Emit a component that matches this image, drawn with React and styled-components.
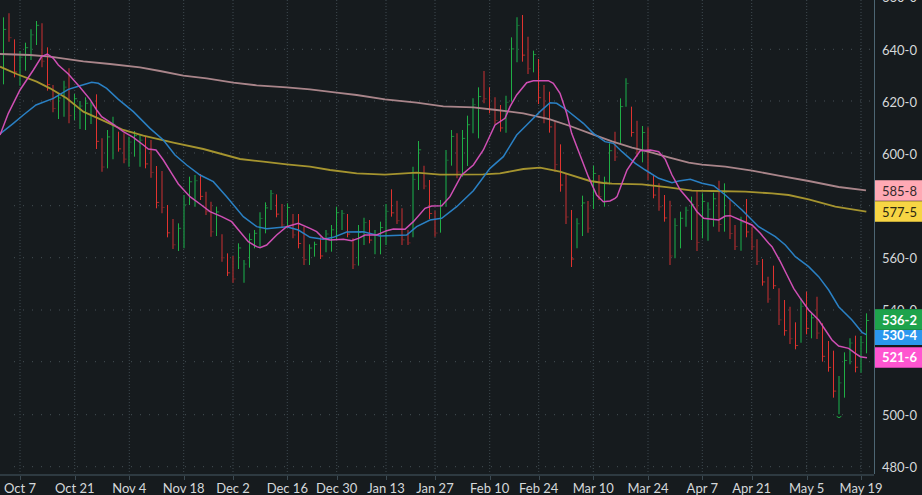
import React from 'react';
import styled, { createGlobalStyle } from 'styled-components';

const Global = createGlobalStyle`
  html, body { margin: 0; padding: 0; background: #161b1e; }
  body { overflow: hidden; }
`;

/* all chart data is in a 3x grid: 2622 x 1422 = 874 x 474 px */
const barSets = [
  [0, [
    [10,52,253,'G'],[26,40,125,'r'],[43,118,232,'R'],[60,153,257,'g'],[76,128,212,'G'],[92,88,180,'g'],[109,63,135,'G'],[125,70,202,'r'],
    [142,142,272,'R'],[158,255,337,'r'],[175,280,357,'G'],[191,242,350,'g'],[207,205,370,'r'],[223,282,360,'G'],[240,303,387,'g'],[256,292,390,'G'],
    [272,305,372,'g'],[289,283,447,'R'],[306,415,515,'r'],[322,390,505,'G'],[338,350,478,'g'],[355,395,455,'R'],[371,400,490,'r'],[387,410,500,'g'],
    [404,393,470,'G'],[420,403,500,'g'],[436,410,505,'R'],[452,420,533,'r'],[469,498,625,'R'],[485,513,640,'r'],[502,615,712,'R'],[518,657,747,'r'],
    [535,670,753,'G'],[551,585,745,'g'],[567,530,615,'G'],[584,525,620,'g'],[600,522,600,'R'],[617,575,645,'r'],[633,605,710,'r'],[649,620,708,'G'],
    [666,703,785,'r'],[682,760,828,'R'],[698,768,848,'r'],[715,730,807,'G'],[731,780,848,'g'],[748,700,803,'G'],[764,690,745,'G'],[781,637,740,'g'],
    [797,607,700,'G'],[813,570,630,'g'],[830,583,652,'R'],[846,612,685,'r'],[862,610,680,'G'],[879,642,715,'r'],[895,642,745,'R'],[911,680,795,'r'],[928,733,795,'G'],
  ]],
  [930, [
    [14,725,770,'G'],[31,712,777,'R'],[47,690,757,'g'],[63,675,755,'G'],[80,620,720,'G'],[96,630,690,'g'],[112,642,712,'R'],[129,715,807,'r'],
    [145,675,797,'G'],[162,653,735,'g'],[178,660,730,'R'],[194,690,763,'g'],[211,665,763,'G'],[227,612,735,'g'],[243,568,650,'R'],[260,602,672,'r'],
    [276,625,735,'r'],[293,690,735,'r'],[309,500,712,'g'],[325,423,570,'G'],[342,497,568,'r'],[358,540,657,'R'],[375,632,710,'r'],[391,600,698,'G'],
    [407,450,620,'g'],[424,390,497,'G'],[440,400,535,'r'],[457,390,530,'G'],[473,347,498,'G'],[489,295,400,'g'],[506,262,415,'G'],[522,213,310,'r'],
    [538,262,340,'R'],[555,292,373,'r'],[571,315,395,'R'],[587,287,398,'g'],[604,112,305,'G'],[620,52,187,'g'],[637,45,185,'R'],[653,110,222,'r'],
    [670,152,217,'G'],[686,177,312,'R'],[702,255,370,'r'],[719,275,398,'R'],[735,365,515,'r'],[752,433,575,'R'],[768,522,672,'r'],[785,630,801,'R'],
    [801,655,745,'g'],[817,587,708,'G'],[834,603,698,'r'],[850,497,627,'G'],[866,525,600,'r'],[883,530,620,'G'],[899,430,553,'G'],
  ]],
  [1836, [
    [9,395,483,'r'],[25,295,433,'G'],[42,235,320,'g'],[58,320,410,'R'],[75,362,470,'r'],[91,378,487,'G'],[107,382,540,'r'],[124,525,595,'R'],
    [140,550,632,'r'],[157,585,665,'R'],[173,602,795,'r'],[189,655,775,'g'],[206,635,745,'G'],[222,620,680,'g'],[238,590,720,'G'],[255,570,753,'r'],
    [271,580,715,'G'],[288,607,722,'g'],[304,578,680,'G'],[320,542,695,'r'],[337,550,695,'G'],[353,600,717,'r'],[370,675,750,'r'],[386,650,752,'g'],
    [402,597,712,'R'],[419,680,750,'r'],[435,718,795,'r'],[451,777,857,'R'],[468,830,908,'r'],[484,797,867,'R'],[501,865,975,'r'],[517,900,1007,'R'],
    [533,920,1032,'r'],[550,967,1048,'R'],[566,895,1028,'g'],[582,875,1003,'R'],[599,940,1015,'G'],[615,890,1017,'r'],[632,970,1085,'R'],[648,1023,1115,'R'],
    [665,1052,1193,'R'],[681,1128,1243,'g'],[697,1057,1193,'G'],[714,1015,1093,'g'],[730,1007,1117,'R'],[746,1008,1118,'g'],[763,940,1060,'G'],
  ]],
];

const bars = barSets.flatMap(([o, list]) => list.map(([x, t, b, k]) => ({ x: x + o, t, b, k })));

const BAR_COLORS = { G: '#1fae45', g: '#19773a', R: '#e0332f', r: '#84282b' };

const poly = (...segs) =>
  segs.flatMap(([o, dy, pts]) => pts.map(([x, y]) => `${x + o},${y + dy}`)).join(' ');

const pinkLine = poly(
  [0,0,[[0,405],[25,340],[60,270],[100,210],[125,170],[142,162],[160,175],[175,195],[205,222],[240,262],[270,298],[290,330],[305,350],[340,373],[370,395],[400,412],[430,435],[445,447],[468,450],[490,480],[515,520],[535,552],[570,590],[600,612],[630,635],[665,650],[695,665],[720,695],[745,725],[770,740],[780,743],[800,735],[830,705],[860,680],[895,670],[930,685]]],
  [930,0,[[20,695],[40,715],[60,720],[100,718],[125,722],[145,715],[165,705],[200,705],[230,692],[250,687],[285,688],[310,665],[345,625],[365,618],[395,617],[420,590],[455,525],[490,495],[520,450],[555,375],[585,355],[600,320],[620,285],[650,248],[670,242],[715,242],[730,250],[750,280],[770,340],[785,400],[810,465],[835,530],[860,585],[880,605],[900,603]]],
  [1836,0,[[9,595],[15,590],[30,550],[45,510],[65,480],[85,452],[115,450],[140,455],[160,478],[180,525],[205,570],[235,605],[255,635],[275,655],[300,658],[320,660],[340,648],[355,647],[385,660],[420,675],[445,700],[470,730]]],
  [1836,735,[[480,5],[505,50],[525,90],[545,130],[565,160],[590,195],[620,225],[640,255],[660,285],[680,303],[710,310],[730,325],[745,335],[765,338]]],
);

const blueLine = poly(
  [0,0,[[0,402],[40,370],[70,345],[108,315],[160,295],[205,268],[240,257],[275,247],[295,250],[320,265],[355,298],[400,335],[450,385],[490,420],[525,465],[560,495],[600,525],[640,545],[680,590],[730,650],[770,680],[800,686],[860,680],[895,690],[930,712]]],
  [930,0,[[40,718],[70,712],[110,696],[160,695],[210,708],[290,705],[320,680],[360,660],[395,655],[440,620],[490,572],[540,505],[580,470],[620,405],[650,375],[690,335],[720,308],[740,310],[770,330],[820,370],[850,400],[885,425]]],
  [1836,0,[[4,430],[30,455],[70,490],[100,510],[140,535],[180,548],[200,543],[235,538],[270,550],[305,557],[340,585],[390,630],[440,680],[490,710]]],
  [1836,735,[[520,0],[550,35],[590,65],[620,95],[650,135],[680,185],[720,225],[750,262],[763,269]]],
);

const roseLine = poly(
  [0,0,[[0,162],[90,165],[150,170],[250,184],[330,192],[420,202],[480,213],[550,227],[620,235],[700,248],[770,256],[860,262],[930,268]]],
  [930,0,[[80,278],[140,285],[225,298],[320,308],[400,319],[490,322],[560,330],[640,340],[720,358],[780,378],[840,400],[906,424]]],
  [1836,0,[[60,443],[120,458],[170,472],[230,488],[270,494],[340,500],[420,512],[500,527],[590,543],[680,561],[762,571]]],
);

const goldLine = poly(
  [0,0,[[0,200],[50,222],[110,245],[150,265],[200,295],[250,335],[310,362],[370,390],[430,407],[520,428],[610,447],[720,477],[790,485],[860,493],[930,500]]],
  [930,0,[[60,510],[140,520],[225,524],[320,518],[390,524],[520,523],[570,520],[640,507],[690,503],[750,515],[840,543],[880,549],[906,551]]],
  [1836,0,[[90,553],[170,562],[240,572],[300,573],[400,575],[480,580],[530,585],[590,598],[670,620],[763,635]]],
);

const TICK_X = [20, 74.7, 129.3, 183.7, 233, 287.3, 336.7, 386, 435, 489.7, 538.7, 593.3, 648, 702.3, 751.7, 806.7, 861];
const DATES = ['Oct 7','Oct 21','Nov 4','Nov 18','Dec 2','Dec 16','Dec 30','Jan 13','Jan 27','Feb 10','Feb 24','Mar 10','Mar 24','Apr 7','Apr 21','May 5','May 19'];
const PRICES = [['660-0',-3],['640-0',49.5],['620-0',101.5],['600-0',153.5],['560-0',257.5],['540-0',310],['500-0',414.5],['480-0',466.5]];
const GRID_Y = [49.3, 101, 153, 205.7, 257.7, 310, 361.7, 414.7, 466.7];

const TAGS = [
  { text: '530-4', top: 324, bg: '#2b97ee', edge: '#2b97ee', fg: '#fff', strong: true },
  { text: '536-2', top: 309, bg: '#1ea34c', edge: '#1a8d43', fg: '#fff', strong: true },
  { text: '521-6', top: 346.5, bg: '#ff55d0', edge: '#c443a3', fg: '#fff', strong: true },
  { text: '585-8', top: 180, bg: '#ffa9b4', edge: '#c98791', fg: '#33292b' },
  { text: '577-5', top: 201, bg: '#f7d544', edge: '#c2a838', fg: '#2b2712' },
];

const Page = styled.div`
  display: grid;
  grid-template-columns: 874px 48px;
  grid-template-rows: 474px 21px;
  width: 922px;
  height: 495px;
  overflow: hidden;
  background: #161b1e;
  font-family: Lato, "Liberation Sans", sans-serif;
  font-size: 13px;
  color: #d5d8da;
`;

const Plot = styled.svg`
  display: block;
  width: 874px;
  height: 474px;
`;

const PriceAxis = styled.div`
  position: relative;
  border-left: 1px solid #4d6673;
  overflow: hidden;
`;

const PriceLabel = styled.span`
  position: absolute;
  right: 5px;
  transform: translateY(-50%);
  line-height: 16px;
`;

const PriceTag = styled.div`
  position: absolute;
  left: 0;
  right: 0;
  height: 21px;
  box-sizing: border-box;
  display: flex;
  align-items: center;
  justify-content: flex-end;
  padding-right: 5px;
  background: ${p => p.$bg};
  color: ${p => p.$fg};
  font-weight: ${p => (p.$strong ? 700 : 400)};
  border-top: 1px solid ${p => p.$edge};
  border-bottom: 1px solid ${p => p.$edge};
`;

const DateAxis = styled.div`
  position: relative;
  border-top: 2px solid #2e3a41;
  box-sizing: border-box;
  height: 21px;
`;

const DateTick = styled.i`
  position: absolute;
  top: 0;
  width: 1px;
  height: 4px;
  background: #3d4b53;
`;

const DateLabel = styled.span`
  position: absolute;
  top: 4px;
  transform: translateX(-50%);
  line-height: 16px;
  white-space: nowrap;
`;

const Corner = styled.div``;

export default function App() {
  return (
    <Page>
      <Global />
      <Plot viewBox="0 0 2622 1422">
        {GRID_Y.map(y => (
          <line key={y} x1="42" x2="2610" y1={y * 3} y2={y * 3} stroke="#465156" strokeWidth="3" strokeDasharray="3 24" />
        ))}
        {TICK_X.map(x => (
          <line key={x} x1={x * 3} x2={x * 3} y1="0" y2="1422" stroke="#3f4a50" strokeWidth="3" strokeDasharray="3 6" />
        ))}
        {bars.map(({ x, t, b, k }, i) => {
          const dim = k === 'g' || k === 'r';
          const up = k === 'g' || k === 'G';
          const px = dim ? Math.round(x / 3) * 3 : Math.floor(x / 3) * 3 + 1.5;
          const closeY = up ? t + (b - t) * 0.18 : b - (b - t) * 0.14;
          return (
            <g key={i} stroke={BAR_COLORS[k]}>
              <line x1={px} x2={px} y1={t} y2={b} strokeWidth={dim ? 5 : 3} />
              <line x1={px} x2={px + 8} y1={closeY} y2={closeY} strokeWidth="3" strokeOpacity="0.75" />
            </g>
          );
        })}
        <path d="M2510 1249 q7 8 14 0" fill="none" stroke="#1fae45" strokeWidth="3" />
        <polyline points={roseLine} fill="none" stroke="#a9858a" strokeWidth="5.5" />
        <polyline points={goldLine} fill="none" stroke="#a5942f" strokeWidth="5.5" />
        <polyline points={blueLine} fill="none" stroke="#2a80c4" strokeWidth="4.5" />
        <polyline points={pinkLine} fill="none" stroke="#cf4fb4" strokeWidth="4.5" />
      </Plot>
      <PriceAxis>
        {PRICES.map(([text, y]) => (
          <PriceLabel key={text} style={{ top: y }}>{text}</PriceLabel>
        ))}
        {TAGS.map(t => (
          <PriceTag key={t.text} $bg={t.bg} $fg={t.fg} $edge={t.edge} $strong={t.strong} style={{ top: t.top }}>{t.text}</PriceTag>
        ))}
      </PriceAxis>
      <DateAxis>
        {TICK_X.map(x => <DateTick key={x} style={{ left: x }} />)}
        {DATES.map((d, i) => <DateLabel key={d} style={{ left: TICK_X[i] }}>{d}</DateLabel>)}
      </DateAxis>
      <Corner />
    </Page>
  );
}
